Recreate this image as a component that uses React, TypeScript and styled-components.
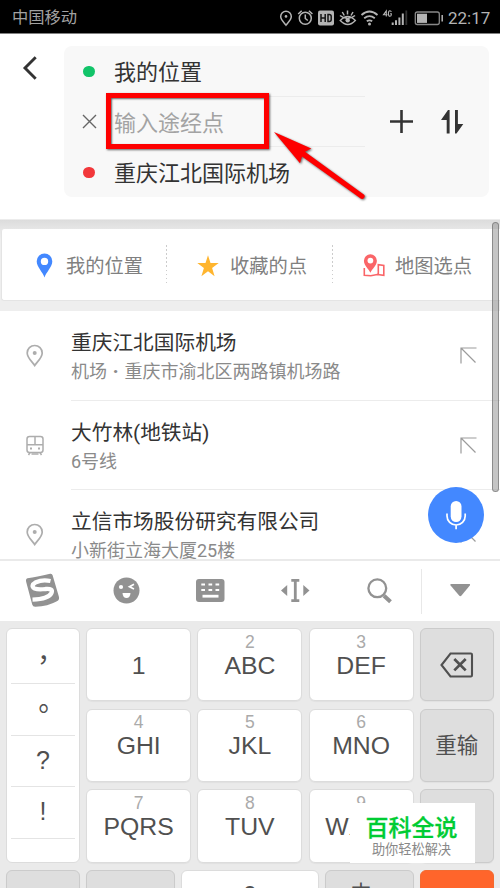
import React from "react";
import styled, { createGlobalStyle } from "styled-components";

const GlobalStyle = createGlobalStyle`
  * { box-sizing: border-box; }
  html, body { margin: 0; padding: 0; background: #fff; }
  body { font-family: Roboto, "Noto Sans CJK SC", sans-serif; overflow: hidden; }
  svg { display: block; flex: none; }
`;

const Screen = styled.div`
  position: relative;
  width: 500px;
  height: 888px;
  overflow: hidden;
  display: flex;
  flex-direction: column;
  background: #fff;
`;

/* ---------- status bar ---------- */
const StatusBar = styled.header`
  height: 34px;
  flex: none;
  display: flex;
  align-items: center;
  padding: 2px 10px 0 12px;
  background: #000;
  border-bottom: 1px solid #808080;
  color: #b4b4b4;
`;
const Carrier = styled.span`
  font-size: 16.3px;
  line-height: 20px;
  color: #a2a2a2;
  flex: 1;
`;
const Clock = styled.span`
  font-size: 17px;
  line-height: 20px;
  width: 42px;
  margin-left: 4px;
  white-space: nowrap;
`;

/* ---------- route header ---------- */
const RouteHeader = styled.section`
  height: 186px;
  flex: none;
  display: flex;
  padding: 12px 11px 0 0;
  border-bottom: 1px solid #ececec;
`;
const BackButton = styled.div`
  width: 64px;
  padding: 9px 0 0 21px;
`;
const RouteCard = styled.div`
  width: 425px;
  height: 151px;
  padding-left: 17px;
  display: flex;
  background: #f8f8f8;
  border-radius: 8px;
`;
const Stops = styled.div`
  width: 284px;
`;
const Stop = styled.div`
  display: flex;
  align-items: center;
  height: 50.5px;
`;
const StopMark = styled.div`
  width: 16px;
  margin-right: 17px;
  display: flex;
  justify-content: center;
`;
const Dot = styled.i<{ $color: string }>`
  width: 11.5px;
  height: 11.5px;
  border-radius: 50%;
  background: ${(p) => p.$color};
`;
const StopLabel = styled.div<{ $muted?: boolean; $last?: boolean }>`
  flex: 1;
  height: 50.5px;
  line-height: 53px;
  font-size: 22px;
  white-space: nowrap;
  color: ${(p) => (p.$muted ? "#a3a3a3" : "#333")};
  border-bottom: 1px solid ${(p) => (p.$last ? "transparent" : "#ececec")};
`;
const RouteActions = styled.div`
  display: flex;
  align-items: center;
  gap: 28px;
  padding-left: 25px;
`;

/* ---------- shortcuts ---------- */
const ShortcutBand = styled.section`
  height: 91px;
  flex: none;
  padding: 9px 0 0 1px;
  background: linear-gradient(#dcdcdc 0, #e6e6e6 9px, #eee 20px);
`;
const Shortcuts = styled.div`
  height: 72px;
  display: flex;
  align-items: center;
  background: #fff;
  border: 1px solid #e4e4e4;
  border-top: 0;
  border-right: 0;
  border-radius: 3px 0 0 3px;
`;
const Shortcut = styled.div<{ $width: number; $pad: number; $gap: number }>`
  width: ${(p) => p.$width}px;
  padding: 2px 0 0 ${(p) => p.$pad}px;
  height: 40px;
  display: flex;
  align-items: center;
  gap: ${(p) => p.$gap}px;
  font-size: 19.3px;
  line-height: 28px;
  color: #808080;
  white-space: nowrap;
`;
const ShortcutLabel = styled.span`
  padding-top: 2px;
`;
const DottedRule = styled.i`
  width: 1px;
  height: 40px;
  background: repeating-linear-gradient(#ccc 0 1.5px, transparent 1.5px 4.1px);
`;

/* ---------- suggestions ---------- */
const Suggestions = styled.section`
  height: 248px;
  flex: none;
  overflow: hidden;
`;
const Suggestion = styled.div`
  height: 89.5px;
  display: flex;
  align-items: center;
`;
const PlaceIcon = styled.div`
  width: 71px;
  padding-left: 26px;
`;
const Place = styled.div`
  flex: 1;
  height: 89.5px;
  padding-top: 17px;
  display: flex;
  border-bottom: 1px solid #ececec;
`;
const PlaceText = styled.div`
  flex: 1;
  white-space: nowrap;
`;
const PlaceName = styled.div`
  height: 30px;
  line-height: 30px;
  font-size: 20.7px;
  color: #333;
`;
const PlaceDetail = styled.div`
  height: 26px;
  line-height: 27px;
  font-size: 18px;
  color: #8a8a8a;
`;
const Separator = styled.span`
  display: inline-block;
  width: 17.5px;
  text-align: center;
  font-weight: 900;
`;
const FillArrow = styled.div`
  width: 40px;
  padding-top: 19px;
`;

/* ---------- keyboard ---------- */
const Toolbar = styled.nav`
  height: 62px;
  flex: none;
  display: flex;
  align-items: center;
  border-top: 2px solid #eaeaea;
  background: #fff;
`;
const Tool = styled.div<{ $width?: number }>`
  width: ${(p) => p.$width ?? 84.3}px;
  flex: none;
  height: 60px;
  display: flex;
  align-items: center;
  justify-content: center;
  padding-bottom: 1px;
`;
const ToolRule = styled.i`
  width: 1px;
  height: 45px;
  background: #e8e8e8;
`;
const Keyboard = styled.section`
  flex: 1;
  padding: 7px 6px 0;
  background: #eaeaea;
  font-family: "Liberation Sans", "Noto Sans CJK SC", sans-serif;
  color: #505050;
`;
const KeyGrid = styled.div`
  display: grid;
  grid-template-columns: 74px 105px 105px 105px 74px;
  grid-template-rows: repeat(3, 73.4px);
  gap: 7.2px 6.2px;
`;
const BottomKeys = styled.div`
  display: grid;
  grid-template-columns: 74px 89px 138px 89px 74px;
  gap: 6px;
  margin-top: 7.2px;
`;
const Key = styled.div<{ $tone?: "grey" | "orange" }>`
  height: 73.4px;
  padding-top: 1px;
  display: flex;
  flex-direction: column;
  align-items: center;
  justify-content: center;
  border: 1px solid
    ${(p) => (p.$tone === "orange" ? "#f36a30" : p.$tone ? "#cbcbcb" : "#dcdcdc")};
  border-radius: 6px;
  background: ${(p) => (p.$tone === "orange" ? "#ff652b" : p.$tone ? "#dedede" : "#fff")};
  box-shadow: 0 1px 1px rgba(0, 0, 0, 0.04);
`;
const KeyDigit = styled.div`
  height: 19px;
  margin-top: -18px;
  line-height: 19px;
  font-size: 17.5px;
  color: #aaa;
`;
const KeyLetters = styled.div<{ $drop?: number }>`
  height: 28px;
  line-height: 28px;
  font-size: 24.8px;
  margin-top: ${(p) => p.$drop ?? 0}px;
`;
const KeyWord = styled.div`
  font-size: 21.5px;
  line-height: 30px;
`;
const LanguageLabel = styled(KeyWord)`
  margin: -25px 17px 0 0;
`;
const PunctuationKey = styled.div`
  grid-row: 1 / 4;
  padding: 3px 4px 0;
  border: 1px solid #dcdcdc;
  border-radius: 6px;
  background: #fff;
`;
const Punctuation = styled.div<{ $wide?: boolean; $line?: number }>`
  height: 51.8px;
  line-height: ${(p) => p.$line ?? 49}px;
  padding-left: ${(p) => (p.$wide ? 1 : 0)}px;
  text-align: center;
  font-family: ${(p) => (p.$wide ? '"Noto Sans CJK TC"' : '"Liberation Sans"')}, sans-serif;
  font-size: ${(p) => (p.$wide ? 27 : 25)}px;
  border-bottom: 1px solid #e4e4e4;
`;

/* ---------- floating layers ---------- */
const Scrollbar = styled.i`
  position: absolute;
  left: 492px;
  top: 222px;
  width: 7px;
  height: 270px;
  border-radius: 4px;
  border: 1px solid rgba(110, 110, 110, 0.65);
  background: rgba(150, 150, 150, 0.55);
`;
const VoiceButton = styled.div`
  position: absolute;
  left: 427.5px;
  top: 487px;
  width: 56px;
  height: 56px;
  border-radius: 50%;
  display: flex;
  align-items: center;
  justify-content: center;
  background: #4388ff;
`;
const Highlight = styled.div`
  position: absolute;
  left: 105.5px;
  top: 93px;
  width: 163px;
  height: 56px;
  border: 5px solid #fe0000;
  box-shadow: 1px 1px 2px rgba(0, 0, 0, 0.6), inset 1px 1px 2px rgba(0, 0, 0, 0.6);
`;
const Pointer = styled.div`
  position: absolute;
  left: 268px;
  top: 126px;
  filter: drop-shadow(1px 1px 1px rgba(0, 0, 0, 0.6));
`;
const Brand = styled.div`
  position: absolute;
  left: 350px;
  top: 803px;
  width: 125px;
  height: 60px;
  padding: 11px 2px 0 0;
  background: #fff;
  text-align: center;
  white-space: nowrap;
`;
const BrandName = styled.div`
  height: 28px;
  line-height: 29px;
  font-size: 23px;
  font-weight: 500;
  -webkit-text-stroke: 0.3px #0c3;
  color: #0c3;
`;
const BrandTag = styled.div`
  height: 16px;
  line-height: 15px;
  font-size: 13.2px;
  color: #888;
`;

const StatusIcons = () => (
  <svg width="166" height="20" viewBox="278 7 166 20" fill="none" stroke="#b4b4b4" strokeWidth="1.5">
    <path d="M286 24.2c-1.5-2.2-5.3-5.2-5.3-8.7a5.3 5.3 0 0 1 10.6 0c0 3.500-3.800 6.500-5.300 8.700z" />
    <circle cx="286" cy="15.400" r="1.300" fill="#b4b4b4" stroke="none" />
    <circle cx="305.300" cy="17.300" r="6" />
    <path d="M305.300 13.500v4l2.500 2M298.200 13l3.500-3.300M312.400 13l-3.500-3.300" />
    <rect x="318" y="9.500" width="16" height="15" rx="2" fill="#b4b4b4" stroke="none" />
    <path d="M321 13v8M325.200 13v8M321 17h4.200M328 13.600v6.800h1.200q2 0 2-2v-2.800q0-2-2-2z" stroke="#151515" />
    <path d="M340 14.500q7.500 6 15 0M340.300 19.500q7.500-8 15 0q-7.500 8-15 0zM347.500 9.500v4M342.300 11l2 3.500M353 11l-2 3.500" />
    <circle cx="347.700" cy="19.300" r="2.200" fill="#b4b4b4" stroke="none" />
    <path d="M361.500 14q8-7 16 0M364.200 17.300q5.300-4.300 10.600 0M366.800 20.300q2.700-2 5.400 0" strokeWidth="1.800" />
    <circle cx="369.500" cy="23" r="1.500" fill="#b4b4b4" stroke="none" />
    <path d="M386.300 15.500V10l-2.800 3.800h4M391.300 11q-.3-1.300-1.400-1.300-1.500 0-1.500 2.800t1.500 2.800q1.400 0 1.400-1.500v-1h-1.200" strokeWidth="1.100" />
    <path d="M392.700 21.500V24M396 19.300V24M399.400 16.500V24M402.800 12.500V24" strokeWidth="2" />
    <path d="M406.300 9.500V24" stroke="#333" strokeWidth="1.800" />
    <rect x="415.300" y="11" width="24" height="12.500" rx="2" strokeWidth="1.300" stroke="#888" />
    <path d="M417 12.700h10v9.200h-10z" fill="#b4b4b4" stroke="none" />
    <path d="M442.200 14v6.500" />
  </svg>
);

const BackIcon = () => (
  <svg width="18" height="26" viewBox="0 0 18 26" fill="none" stroke="#333" strokeWidth="2.900">
    <path d="M14.700 2.300L4 13l10.700 10.700" />
  </svg>
);
const CloseIcon = () => (
  <svg width="15" height="15" viewBox="0 0 15 15" stroke="#666" strokeWidth="1.400">
    <path d="M1 1l13 13M14 1L1 14" />
  </svg>
);
const PlusIcon = () => (
  <svg width="23" height="23" viewBox="0 0 23 23" stroke="#333" strokeWidth="2.600">
    <path d="M11.500 0v23M0 11.500h23" />
  </svg>
);
const SwapIcon = () => (
  <svg width="23" height="24" viewBox="0 0 23 24" fill="#333">
    <path d="M8.600 0v23.500H5.700V10H0L7 0zM14 0v23.500h1.500L22.300 14H16.900V0z" />
  </svg>
);
const BluePin = () => (
  <svg width="17" height="25" viewBox="0 0 17 25">
    <path fill="#4388ff" fillRule="evenodd" d="M8.500 24.500C7 19.500.7 14 .7 8.300a7.800 7.800 0 0 1 15.600 0C16.300 14 10 19.500 8.500 24.500zM8.500 4.700a3.700 3.700 0 1 0 0 7.400 3.700 3.700 0 0 0 0-7.400z" />
  </svg>
);
const StarIcon = () => (
  <svg width="22" height="22" viewBox="0 0 22 22">
    <path fill="#ffb52e" d="M11 .3l2.500 7.800h8.200l-6.600 4.800 2.500 8.300L11 16.300l-6.600 4.900 2.500-8.300L.3 8.100h8.200z" />
  </svg>
);
const MapPin = () => (
  <svg width="22" height="23" viewBox="0 0 22 23">
    <path fill="#fa6568" fillRule="evenodd" d="M7.400 18.700C6 15.500.9 11.500.9 6.800a6.500 6.500 0 0 1 13 0c0 4.700-5.100 8.700-6.500 11.900zM7.400 3.700a2.900 2.900 0 1 0 0 5.800 2.900 2.900 0 0 0 0-5.800z" />
    <path fill="none" stroke="#fa6568" strokeWidth="1.600" d="M1.300 14v7.200l6.500.6 6.500-1.300 6.500.9V11.500l-5.500-.8v9.500" />
  </svg>
);
const GreyPin = () => (
  <svg width="18" height="23" viewBox="0 0 18 23" fill="none" stroke="#adadad" strokeWidth="1.700">
    <path d="M8.700 21.500C6.500 18 1.200 14 1.200 9a7.500 7.500 0 0 1 15 0c0 5-5.300 9-7.500 12.500z" />
    <circle cx="8.700" cy="9" r="2" fill="#adadad" stroke="none" />
  </svg>
);
const TrainIcon = () => (
  <svg width="18" height="21" viewBox="0 0 18 21" fill="none" stroke="#adadad" strokeWidth="1.500">
    <rect x="1" y="1.500" width="16" height="16" rx="2.500" />
    <path d="M1 9.800h16M9 1.500v8.300M4 17.500L2.500 20M14 17.500l1.500 2.500M5.500 18.900h7" />
    <path d="M4 13.500h2M12 13.500h2" strokeWidth="1.800" />
  </svg>
);
const NorthWest = () => (
  <svg width="17" height="17" viewBox="0 0 17 17" fill="none" stroke="#9b9b9b" strokeWidth="1.200">
    <path d="M16.500 1H1v15.500M1 1l14.500 14.500" />
  </svg>
);
const MicIcon = () => (
  <svg width="22" height="30" viewBox="0 0 22 30">
    <rect x="5.700" y="1" width="10.800" height="21" rx="5.400" fill="#fff" />
    <path fill="none" stroke="#fff" strokeWidth="1.700" d="M2 13.500v2.400a9.100 9.100 0 0 0 18.200 0v-2.400M11.100 25v4.300" />
  </svg>
);
const SogouIcon = () => (
  <svg width="36" height="36" viewBox="24 573 36 36">
    <path fill="#929292" d="M27.500 578.300q9-1.300 22.600-4.500 2-.4 2.500 1.500l6.300 21.500q.8 3-2 4.500-9 5-21.500 5.500-2.500.2-3.200-2.300l-6-22.500q-.8-3 1.300-3.700z" />
    <path fill="none" stroke="#fff" strokeWidth="4.300" d="M50.500 581q-8-1.800-14.500 1.200-6 3.500-1.500 6.300 4 1.600 11 .5 8-.8 6 4-3 6-19 6.700" />
  </svg>
);
const EmojiIcon = () => (
  <svg width="27" height="27" viewBox="0 0 27 27">
    <circle cx="13.500" cy="13.500" r="13" fill="#929292" />
    <circle cx="8" cy="10" r="2.100" fill="#fff" />
    <path d="M21 7.300l-4.500 2.400 4.500 2.200" fill="none" stroke="#fff" strokeWidth="1.700" />
    <path d="M9.500 16h8q-.3 5-4 5t-4-5z" fill="#fff" />
  </svg>
);
const KeyboardIcon = () => (
  <svg width="29" height="23" viewBox="0 0 29 23">
    <rect width="28.500" height="23" rx="3" fill="#929292" />
    <path stroke="#fff" strokeWidth="2.200" d="M5.300 5.500H9M12.500 5.500h3.700M19.500 5.500h3.700M5.300 11H9M12.500 11h3.700M19.500 11h3.700" />
    <path stroke="#fff" strokeWidth="2.800" d="M6.500 17.200H22.500" />
  </svg>
);
const CursorIcon = () => (
  <svg width="29" height="23" viewBox="0 0 29 23" fill="#929292">
    <path d="M0 11.500L6.200 6v11zM28.500 11.500L22.300 6v11z" />
    <path d="M10.300 0h8v2.800h-2.600v17.400h2.600V23h-8v-2.800h2.600V2.800h-2.600z" />
  </svg>
);
const SearchIcon = () => (
  <svg width="25" height="26" viewBox="0 0 25 26" fill="none" stroke="#929292">
    <circle cx="10.300" cy="10.300" r="8.900" strokeWidth="2.300" />
    <path d="M17 17.700l6.500 6" strokeWidth="4" />
  </svg>
);
const DownIcon = () => (
  <svg width="21" height="13" viewBox="0 0 21 13" fill="#929292">
    <path d="M1 0h18.500q1 0 .3 1.500L11.500 11.600q-1.200 1.200-2.400 0L.6 1.500Q-.1 0 1 0z" />
  </svg>
);
const BackspaceIcon = () => (
  <svg width="34" height="26" viewBox="0 0 34 26" fill="none" stroke="#505050" strokeWidth="2.100">
    <path d="M10.500 1.500h20.300q1.200 0 1.200 1.200v20.600q0 1.200-1.200 1.200H10.500L1.500 13z" />
    <path d="M14.300 7l11.400 11.400M25.700 7L14.300 18.400" strokeWidth="2.700" />
  </svg>
);
const PointerArrow = () => (
  <svg width="100" height="78" viewBox="268 126 100 78">
    <path fill="#fe0000" d="M274 132l37.300 16.500-6.300 3.200 58.800 42.700q1.700 1.500.3 3.400-1.500 1.900-3.400.8L302 156.500l-2 6.800z" />
  </svg>
);

const places = [
  { name: "重庆江北国际机场", kind: "机场", detail: "重庆市渝北区两路镇机场路", icon: <GreyPin /> },
  { name: "大竹林(地铁站)", detail: "6号线", icon: <TrainIcon /> },
  { name: "立信市场股份研究有限公司", detail: "小新街立海大厦25楼", icon: <GreyPin /> },
];

const LetterKey = ({ digit, letters }: { digit: string; letters: string }) => (
  <Key>
    <KeyDigit>{digit}</KeyDigit>
    <KeyLetters>{letters}</KeyLetters>
  </Key>
);

export default function App() {
  return (
    <Screen>
      <GlobalStyle />
      <StatusBar>
        <Carrier>中国移动</Carrier>
        <StatusIcons />
        <Clock>22:17</Clock>
      </StatusBar>

      <RouteHeader>
        <BackButton><BackIcon /></BackButton>
        <RouteCard>
          <Stops>
            <Stop>
              <StopMark><Dot $color="#12c469" /></StopMark>
              <StopLabel>我的位置</StopLabel>
            </Stop>
            <Stop>
              <StopMark><CloseIcon /></StopMark>
              <StopLabel $muted>输入途经点</StopLabel>
            </Stop>
            <Stop>
              <StopMark><Dot $color="#f2383b" /></StopMark>
              <StopLabel $last>重庆江北国际机场</StopLabel>
            </Stop>
          </Stops>
          <RouteActions>
            <PlusIcon />
            <SwapIcon />
          </RouteActions>
        </RouteCard>
      </RouteHeader>

      <ShortcutBand>
        <Shortcuts>
          <Shortcut $width={164} $pad={34} $gap={13}>
            <BluePin /><ShortcutLabel>我的位置</ShortcutLabel>
          </Shortcut>
          <DottedRule />
          <Shortcut $width={165} $pad={30} $gap={11}>
            <StarIcon /><ShortcutLabel>收藏的点</ShortcutLabel>
          </Shortcut>
          <DottedRule />
          <Shortcut $width={166} $pad={30} $gap={10}>
            <MapPin /><ShortcutLabel>地图选点</ShortcutLabel>
          </Shortcut>
        </Shortcuts>
      </ShortcutBand>

      <Suggestions>
        {places.map((p) => (
          <Suggestion key={p.name}>
            <PlaceIcon>{p.icon}</PlaceIcon>
            <Place>
              <PlaceText>
                <PlaceName>{p.name}</PlaceName>
                <PlaceDetail>
                  {p.kind && <>{p.kind}<Separator>·</Separator></>}
                  {p.detail}
                </PlaceDetail>
              </PlaceText>
              <FillArrow><NorthWest /></FillArrow>
            </Place>
          </Suggestion>
        ))}
      </Suggestions>

      <Toolbar>
        <Tool><SogouIcon /></Tool>
        <Tool><EmojiIcon /></Tool>
        <Tool><KeyboardIcon /></Tool>
        <Tool><CursorIcon /></Tool>
        <Tool><SearchIcon /></Tool>
        <ToolRule />
        <Tool $width={77}><DownIcon /></Tool>
      </Toolbar>

      <Keyboard>
        <KeyGrid>
          <PunctuationKey>
            <Punctuation $wide $line={54}>，</Punctuation>
            <Punctuation $wide $line={48}>。</Punctuation>
            <Punctuation>?</Punctuation>
            <Punctuation>!</Punctuation>
          </PunctuationKey>
          <Key><KeyLetters $drop={1}>1</KeyLetters></Key>
          <LetterKey digit="2" letters="ABC" />
          <LetterKey digit="3" letters="DEF" />
          <Key $tone="grey"><BackspaceIcon /></Key>
          <LetterKey digit="4" letters="GHI" />
          <LetterKey digit="5" letters="JKL" />
          <LetterKey digit="6" letters="MNO" />
          <Key $tone="grey"><KeyWord>重输</KeyWord></Key>
          <LetterKey digit="7" letters="PQRS" />
          <LetterKey digit="8" letters="TUV" />
          <LetterKey digit="9" letters="WXYZ" />
          <Key $tone="grey" />
        </KeyGrid>
        <BottomKeys>
          <Key $tone="grey" />
          <Key $tone="grey" />
          <Key><KeyLetters $drop={-24}>0</KeyLetters></Key>
          <Key $tone="grey"><LanguageLabel>中</LanguageLabel></Key>
          <Key $tone="orange" />
        </BottomKeys>
      </Keyboard>

      <Scrollbar />
      <VoiceButton><MicIcon /></VoiceButton>
      <Highlight />
      <Pointer><PointerArrow /></Pointer>
      <Brand>
        <BrandName>百科全说</BrandName>
        <BrandTag>助你轻松解决</BrandTag>
      </Brand>
    </Screen>
  );
}
